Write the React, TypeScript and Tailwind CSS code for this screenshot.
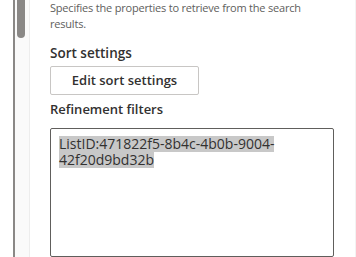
export default function App() {
  return (
    <div
      className="flex h-[257px] w-[356px] overflow-hidden bg-white"
      style={{ fontFamily: '"Open Sans", "Noto Sans", sans-serif' }}
    >
      {/* left edge + scrollbar */}
      <div className="w-[13px] shrink-0 bg-white" />
      <div className="w-[2px] shrink-0 bg-[#8a8886]" />
      <div className="flex w-[14px] shrink-0 justify-center bg-[#fafafa]">
        <div className="ml-[-2px] h-[38px] w-[8px] rounded-b-full bg-[#8a8886]" />
      </div>
      <div className="w-px shrink-0 bg-[#ededed]" />

      {/* panel content */}
      <div className="flex min-w-0 flex-1 flex-col border-r border-[#f3f3f3] pl-5 pr-[21px]">
        <p className="mt-0 whitespace-nowrap text-[11px] leading-4 tracking-[-0.2px] text-[#605e5c]">
          Specifies the properties to retrieve from the search
          <br />
          results.
        </p>

        <h3 className="mt-[11px] text-[13.5px] font-semibold leading-5 text-[#323130]">Sort settings</h3>
        <button className="mt-[3px] h-[31px] w-[149px] rounded-[2px] border border-[#c8c6c4] bg-white text-[13px] font-semibold text-[#323130]">
          Edit sort settings
        </button>

        <h3 className="mt-[4px] text-[13px] font-semibold leading-5 text-[#323130]">Refinement filters</h3>
        <div className="mt-[9px] h-[140px] rounded-[2px] border border-[#605e5c] px-[8px] pt-[7px] text-[14px] text-[#323130]">
          <div className="h-4 w-fit bg-[#c8c8c8] leading-4">ListID:471822f5-8b4c-4b0b-9004-</div>
          <div className="h-4 w-fit bg-[#c8c8c8] leading-4">42f20d9bd32b</div>
        </div>
      </div>
    </div>
  );
}
